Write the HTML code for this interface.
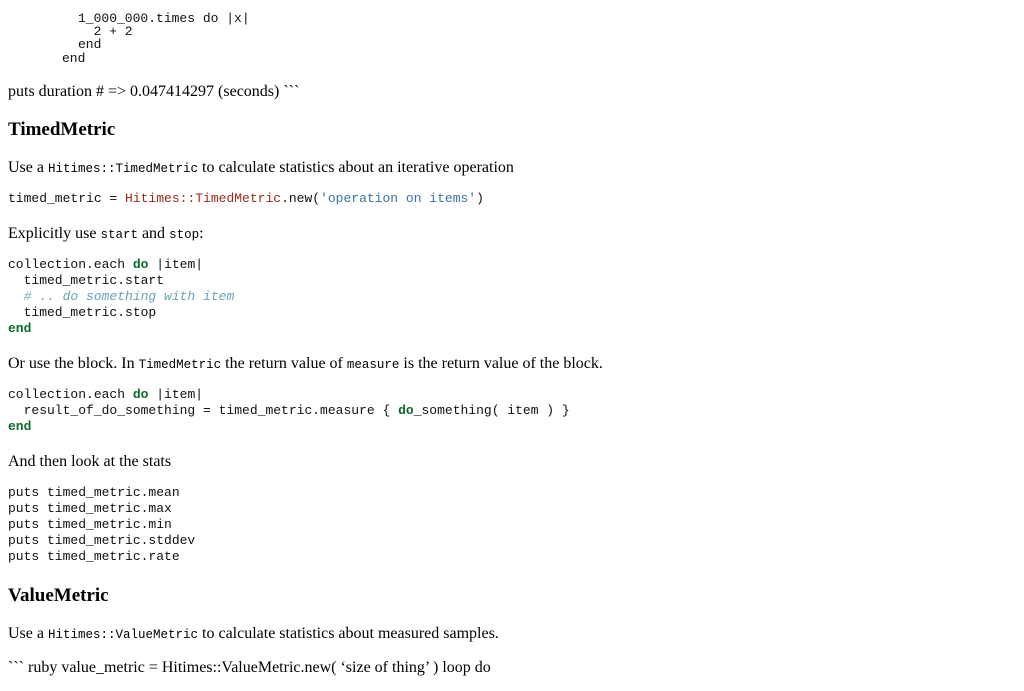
<!DOCTYPE html>
<html><head><meta charset="utf-8"><style>
body{margin:0;background:#fff;width:1024px;height:691px;overflow:hidden;position:relative;color:#000}
.l{position:absolute;left:8px;white-space:pre}
.t{font-family:"Liberation Serif",serif;font-size:16px;line-height:20px}
.h{font-family:"Liberation Serif",serif;font-size:19px;font-weight:bold;line-height:24px}
.c{font-family:"Liberation Mono",monospace;font-size:13px;line-height:16px;color:#111}
code{font-family:"Liberation Mono",monospace;font-size:12.5px}
.k{color:#0a6b2a;font-weight:bold}
.r{color:#9b2a1b}
.s{color:#3a72a8}
.m{color:#6aa3b8;font-style:italic}
</style></head><body>
<div class="l c" style="left:78px;top:12px;line-height:13px">1_000_000.times do |x|
  2 + 2
end</div>
<div class="l c" style="left:62px;top:51px">end</div>
<div class="l t" style="top:82px">puts duration # =&gt; 0.047414297 (seconds) &#96;&#96;&#96;</div>
<div class="l h" style="top:118px">TimedMetric</div>
<div class="l t" style="top:158px">Use a <code>Hitimes::TimedMetric</code> to calculate statistics about an iterative operation</div>
<div class="l c" style="top:191px">timed_metric = <span class="r">Hitimes::TimedMetric</span>.new(<span class="s">'operation on items'</span>)</div>
<div class="l t" style="top:224px">Explicitly use <code>start</code> and <code>stop</code>:</div>
<div class="l c" style="top:257px">collection.each <span class="k">do</span> |item|
  timed_metric.start
  <span class="m"># .. do something with item</span>
  timed_metric.stop
<span class="k">end</span></div>
<div class="l t" style="top:354px">Or use the block. In <code>TimedMetric</code> the return value of <code>measure</code> is the return value of the block.</div>
<div class="l c" style="top:387px">collection.each <span class="k">do</span> |item|
  result_of_do_something = timed_metric.measure { <span class="k">do</span>_something( item ) }
<span class="k">end</span></div>
<div class="l t" style="top:452px">And then look at the stats</div>
<div class="l c" style="top:485px">puts timed_metric.mean
puts timed_metric.max
puts timed_metric.min
puts timed_metric.stddev
puts timed_metric.rate</div>
<div class="l h" style="top:584px">ValueMetric</div>
<div class="l t" style="top:624px">Use a <code>Hitimes::ValueMetric</code> to calculate statistics about measured samples.</div>
<div class="l t" style="top:658px">&#96;&#96;&#96; ruby value_metric = Hitimes::ValueMetric.new( &#8216;size of thing&#8217; ) loop do</div>
</body></html>
